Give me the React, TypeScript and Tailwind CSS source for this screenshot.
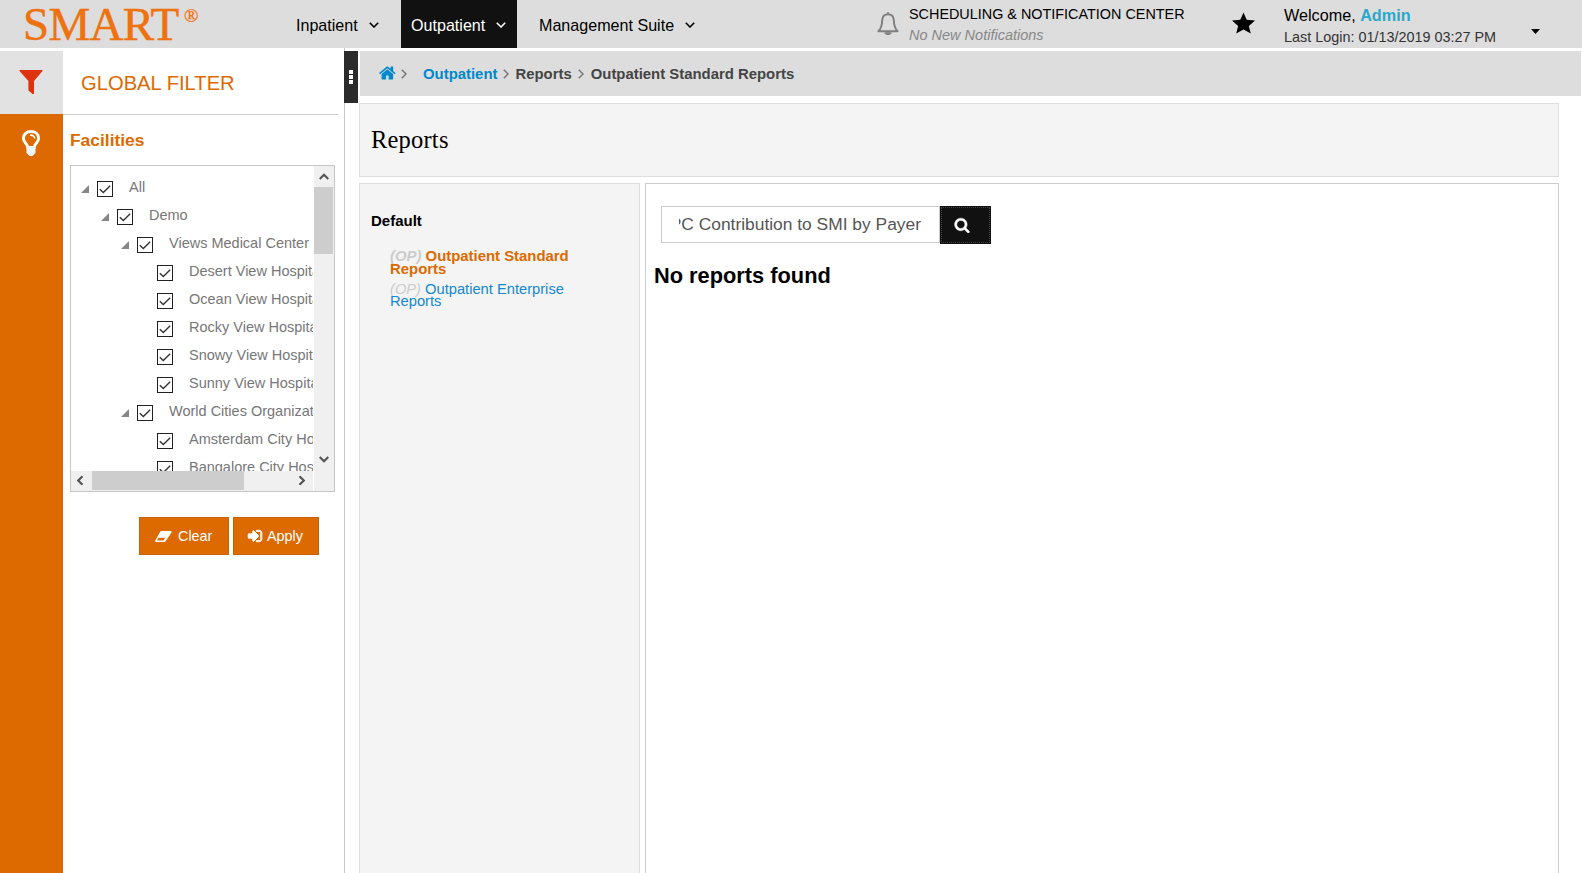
import type { ReactNode } from "react";

const PATHS = {
  home: "M1408 992v480q0 26-19 45t-45 19h-384v-384h-256v384h-384q-26 0-45-19t-19-45v-480q0-1 .5-3t.5-3l575-474 575 474q1 2 1 6zm223-69l-62 74q-8 9-21 11h-3q-13 0-21-7l-692-577-692 577q-12 8-24 7-13-2-21-11l-62-74q-8-10-7-23.5t11-21.5l719-599q32-26 76-26t76 26l244 204v-195q0-14 9-23t23-9h192q14 0 23 9t9 23v408l219 182q10 8 11 21.5t-7 23.5z",
  search:
    "M1216 832q0-185-131.5-316.5t-316.5-131.5-316.5 131.5-131.5 316.5 131.5 316.5 316.5 131.5 316.5-131.5 131.5-316.5zm512 832q0 52-38 90t-90 38q-54 0-90-38l-343-342q-179 124-399 124-143 0-273.5-55.5t-225-150-150-225-55.5-273.5 55.5-273.5 150-225 225-150 273.5-55.5 273.5 55.5 225 150 150 225 55.5 273.5q0 220-124 399l343 343q37 37 37 90z",
  eraser:
    "M6.300 0H15.800Q17 .3 16.500 1.500L10.600 10.200Q10 11 9.200 11H1Q-.2 10.700 .3 9.500L5.200 .7Q5.600 0 6.300 0ZM3.600 6.800L1.900 9.600H8.600L10.300 6.800Z",
  signIn:
    "M1312 896q0 26-19 45l-544 544q-19 19-45 19t-45-19-19-45v-288h-448q-26 0-45-19t-19-45v-384q0-26 19-45t45-19h448v-288q0-26 19-45t45-19 45 19l544 544q19 19 19 45zm352-352v704q0 119-84.5 203.5t-203.5 84.5h-320q-13 0-22.5-9.5t-9.5-22.5q0-4-1-20t-.5-26.5 3-23.5 10-19.5 20.5-6.5h320q66 0 113-47t47-113v-704q0-66-47-113t-113-47h-312l-11.5-1-11.5-3-8-5.5-7-9-2-13.5q0-4-1-20t-.5-26.5 3-23.5 10-19.5 20.5-6.5h320q119 0 203.5 84.5t84.5 203.5z",
};

function Glyph({ d, box = "0 0 1792 1792", className }: { d: string; box?: string; className: string }) {
  return (
    <svg viewBox={box} className={className} fill="currentColor" fillRule="evenodd">
      <path d={d} />
    </svg>
  );
}

function Chevron({ className }: { className: string }) {
  return (
    <svg viewBox="0 0 10 6" className={className} fill="none" stroke="currentColor" strokeWidth="1.6">
      <path d="M0.8 0.8L5 5L9.2 0.8" />
    </svg>
  );
}

function Crumb() {
  return (
    <svg viewBox="0 0 6 10" className="h-[10px] w-[6px] text-[#777]" fill="none" stroke="currentColor" strokeWidth="1.5">
      <path d="M0.8 0.8L5 5L0.8 9.2" />
    </svg>
  );
}

function ScrollArrow({ turn }: { turn: string }) {
  return (
    <svg viewBox="0 0 10 7" className={"h-[7px] w-[10px] " + turn} fill="none" stroke="#555" strokeWidth="2.2">
      <path d="M0.7 6L5 1.7L9.3 6" />
    </svg>
  );
}

function NavItem({ label, className }: { label: string; className: string }) {
  return (
    <a className={"flex h-12 items-center pl-[10px] text-[16.1px] " + className}>
      <span className="pt-px leading-[48px]">{label}</span>
      <Chevron className="ml-[11px] mt-px h-[6px] w-[10px]" />
    </a>
  );
}

function Header() {
  return (
    <header className="flex h-12 shrink-0 items-start bg-[#ddd] whitespace-nowrap text-black">
      <div className="flex h-12 w-[286px] items-start pl-[23px] font-['Liberation_Serif',serif] text-[#ee7210]">
        <span className="w-[161px] text-[47px] leading-[48px] tracking-[-0.7px] [-webkit-text-stroke:0.5px_#ee7210]">SMART</span>
        <span className="mt-[4px] text-[19px] leading-[24px] [-webkit-text-stroke:0.3px_#ee7210]">®</span>
      </div>
      <nav className="flex w-[591px]">
        <NavItem label="Inpatient" className="w-[115px]" />
        <NavItem label="Outpatient" className="w-[116px] bg-[#111] text-white" />
        <NavItem label="Management Suite" className="ml-[12px]" />
      </nav>
      <svg viewBox="0 0 22 24" className="mt-[12px] h-[24px] w-[22px] text-[#808080]">
        <path
          d="M11 2.2C7.4 2.2 5.4 4.8 5.2 8.2C5 13.5 4.3 16.5 1.4 19.2H20.6C17.7 16.5 17 13.5 16.8 8.2C16.6 4.8 14.6 2.2 11 2.2Z"
          fill="none"
          stroke="currentColor"
          strokeWidth="2"
          strokeLinejoin="round"
        />
        <path d="M10 0.3h2v2h-2zM7.2 20.2h7.6c-.3 1.8-1.8 2.9-3.8 2.9s-3.5-1.1-3.8-2.9z" fill="currentColor" />
      </svg>
      <div className="ml-[10px] w-[323px]">
        <div className="mt-[4px] text-[14.4px] leading-[20px]">SCHEDULING &amp; NOTIFICATION CENTER</div>
        <div className="mt-px text-[14.5px] leading-[20px] text-[#888] italic">No New Notifications</div>
      </div>
      <svg viewBox="0 0 24 22" className="mt-[12px] h-[22px] w-[23px]" fill="#000">
        <path d="M12 0L15.3 7.6L24 8.4L17.6 14L19.6 22L12 17.8L4.4 22L6.4 14L0 8.4L8.7 7.6Z" />
      </svg>
      <div className="ml-[29px] w-[247px]">
        <div className="mt-[5px] text-[16.2px] leading-[20px]">
          Welcome, <b className="text-[#29a8cd]">Admin</b>
        </div>
        <div className="mt-[2px] text-[14.4px] leading-[20px] text-[#333]">Last Login: 01/13/2019 03:27 PM</div>
      </div>
      <svg viewBox="0 0 9 5" className="mt-[29px] h-[5px] w-[9px]">
        <path d="M0 0H9L4.5 5Z" />
      </svg>
    </header>
  );
}

const FACILITIES = [
  { name: "All", depth: 0, open: true },
  { name: "Demo", depth: 1, open: true },
  { name: "Views Medical Center", depth: 2, open: true },
  { name: "Desert View Hospital", depth: 3, open: false },
  { name: "Ocean View Hospital", depth: 3, open: false },
  { name: "Rocky View Hospital", depth: 3, open: false },
  { name: "Snowy View Hospital", depth: 3, open: false },
  { name: "Sunny View Hospital", depth: 3, open: false },
  { name: "World Cities Organization", depth: 2, open: true },
  { name: "Amsterdam City Hospital", depth: 3, open: false },
  { name: "Bangalore City Hospital", depth: 3, open: false },
];

const INDENT = ["pl-[10px]", "pl-[30px]", "pl-[50px]", "pl-[70px]"];

function Tree() {
  return (
    <div className="ml-[7px] grid h-[327px] w-[265px] grid-cols-[243px_20px] grid-rows-[305px_20px] border border-[#c6c6c6]">
      <div className="overflow-hidden pt-[8px] pr-px">
        <div className="h-[297px] w-[242px] overflow-hidden">
          {FACILITIES.map((f) => (
            <div key={f.name} className={"flex h-[28px] items-start whitespace-nowrap " + INDENT[f.depth]}>
              <svg viewBox="0 0 8 8" className="mt-[11px] h-[8px] w-[8px] shrink-0">
                {f.open && <path d="M8 0V8H0Z" fill="#868686" />}
              </svg>
              <svg viewBox="0 0 16 16" className="mt-[7px] ml-[8px] h-[16px] w-[16px] shrink-0" fill="none">
                <rect x="0.5" y="0.5" width="15" height="15" fill="#fff" stroke="#222" />
                <path d="M2.8 8.2L6.3 11.6L13.2 4.7" stroke="#333" strokeWidth="1.4" />
              </svg>
              <span className="mt-[3px] ml-[16px] text-[14.5px] leading-[20px] text-[#777]">{f.name}</span>
            </div>
          ))}
        </div>
      </div>
      <div className="row-span-2 flex flex-col items-center bg-[#f0f0f0]">
        <div className="flex h-[21px] items-center pr-px">
          <ScrollArrow turn="" />
        </div>
        <div className="mr-px h-[67px] w-[19px] bg-[#cdcdcd]" />
        <div className="mt-[195px] flex h-[24px] items-start pt-[7px] pr-px">
          <ScrollArrow turn="rotate-180" />
        </div>
      </div>
      <div className="mr-px flex items-center bg-[#f0f0f0]">
        <div className="flex w-[21px] justify-center pr-[3px] pb-px">
          <ScrollArrow turn="-rotate-90" />
        </div>
        <div className="mb-px h-[19px] w-[152px] bg-[#cdcdcd]" />
        <div className="ml-[47px] flex w-[21px] justify-center pb-px">
          <ScrollArrow turn="rotate-90" />
        </div>
      </div>
    </div>
  );
}

function Action({ label, icon, className }: { label: string; icon: ReactNode; className: string }) {
  return (
    <button className={"flex h-[38px] items-center border border-[#c86100] bg-[#dc6a00] text-[14.4px] text-white " + className}>
      {icon}
      <span className="pt-px">{label}</span>
    </button>
  );
}

function Sidebar() {
  return (
    <aside className="flex w-[344px] shrink-0">
      <div className="flex w-[63px] shrink-0 flex-col bg-[#dc6a00] pt-[3px] shadow-[inset_0_3px_0_#fff]">
        <div className="flex h-[63px] justify-center bg-[#e2e2e2] pt-[19px] pr-px">
          <svg viewBox="0 0 24 24" className="h-[24px] w-[24px]" fill="#dd3311">
            <path d="M0.8 0H23.2Q24 0.2 23.5 1L15 11V24H13.6L9.4 20.4V11L0.5 1Q0 0.2 0.8 0Z" />
          </svg>
        </div>
        <svg viewBox="0 0 20 26" className="mt-[16px] ml-[21px] h-[26px] w-[20px]">
          <path
            d="M6.8 17.5C6.4 13.5 2.4 12.5 2.4 8.2C2.4 4.2 5.7 1.5 10 1.5S17.600 4.200 17.600 8.200C17.600 12.500 13.600 13.500 13.200 17.500Z"
            fill="none"
            stroke="#fff"
            strokeWidth="2.9"
          />
          <path d="M5.500 17h9v5.400c0 .8-.5 1.200-1.200 1.300C12.800 25.300 11.700 26 10 26s-2.800-.7-3.300-2.300c-.7-.1-1.200-.5-1.200-1.300z" fill="#eef5ff" />
          <path d="M9 5.200C11.500 4.800 13.500 6.200 13.800 8.500" fill="none" stroke="#fff" strokeWidth="1.600" />
        </svg>
      </div>
      <div className="w-[281px]">
        <div className="mt-[3px] flex h-[64px] w-[275px] items-center border-b border-[#ccc] pt-[2px] pl-[18px] text-[20.2px] text-[#dc6a00]">
          GLOBAL FILTER
        </div>
        <h4 className="mt-[13px] mb-[13px] pl-[7px] text-[17.4px] leading-[24px] font-bold text-[#dc6a00]">Facilities</h4>
        <Tree />
        <div className="mt-[25px] ml-[76px] flex gap-[4px]">
          <Action
            label="Clear"
            className="w-[90px] gap-[6px] pl-[15px]"
            icon={<Glyph d={PATHS.eraser} box="0 0 17 11" className="h-[11px] w-[17px]" />}
          />
          <Action
            label="Apply"
            className="w-[86px] gap-[4px] pl-[13px]"
            icon={<Glyph d={PATHS.signIn} className="h-[16px] w-[16px] stroke-white [stroke-width:90]" />}
          />
        </div>
      </div>
    </aside>
  );
}

function Handle() {
  return (
    <div className="w-[15px] shrink-0 border-l border-[#c8c8c8]">
      <div className="mt-[3px] -ml-px flex h-[52px] w-[14px] flex-col items-center justify-center gap-[1px] bg-[#2b2b2b]">
        <span className="h-[4px] w-[4px] bg-white" />
        <span className="h-[4px] w-[4px] bg-white" />
        <span className="h-[4px] w-[4px] bg-white" />
      </div>
    </div>
  );
}

function Breadcrumbs() {
  return (
    <div className="mt-[3px] ml-px flex h-[45px] w-[1221px] items-center bg-[#ddd] pt-px text-[14.9px] font-bold whitespace-nowrap text-[#444]">
      <Glyph d={PATHS.home} className="-mt-[3px] ml-[19px] h-[18px] w-[18px] text-[#0088cc]" />
      <span className="ml-[4px] flex w-[22px]">
        <Crumb />
      </span>
      <a className="text-[#0088cc]">Outpatient</a>
      <span className="flex w-[18px] justify-center pr-px">
        <Crumb />
      </span>
      <span>Reports</span>
      <span className="flex w-[19px] justify-center pr-px">
        <Crumb />
      </span>
      <span>Outpatient Standard Reports</span>
    </div>
  );
}

function ReportList() {
  return (
    <section className="w-[281px] border border-b-0 border-[#ddd] bg-[#f4f4f4] pl-[11px]">
      <h5 className="mt-[27px] text-[15px] leading-[20px] font-bold text-black">Default</h5>
      <ul className="ml-[19px] w-[200px]">
        <li className="mt-[19px] text-[14.9px] leading-[13px] font-bold text-[#dc6a00]">
          <i className="text-[#ccc]">(OP)</i> Outpatient Standard Reports
        </li>
        <li className="mt-[7px] text-[14.7px] leading-[12px] text-[#1289cf]">
          <i className="text-[#ccc]">(OP)</i> Outpatient Enterprise Reports
        </li>
      </ul>
    </section>
  );
}

function Results() {
  return (
    <section className="ml-[5px] w-[914px] border border-b-0 border-[#ccc] bg-white">
      <div className="mt-[22px] ml-[15px] flex items-start">
        <div className="h-[37px] w-[279px] border border-[#ccc] pr-[18px] pl-[17px]">
          <div className="flex h-[35px] items-center justify-end overflow-hidden text-[17.4px] whitespace-nowrap text-[#555]">
            <span>PC Contribution to SMI by Payer</span>
          </div>
        </div>
        <button className="flex h-[38px] w-[51px] bg-[#111] p-px">
          <span className="flex h-full w-full items-center border border-dotted border-[#444] pl-[12px]">
            <Glyph d={PATHS.search} className="h-[16px] w-[16px] stroke-white text-white [stroke-width:50]" />
          </span>
        </button>
      </div>
      <h3 className="mt-[17px] ml-[8px] text-[21.8px] leading-[30px] font-bold text-black">No reports found</h3>
    </section>
  );
}

export default function App() {
  return (
    <div className="flex h-[873px] w-[1582px] flex-col overflow-hidden bg-white font-['Liberation_Sans',Arial,sans-serif]">
      <Header />
      <div className="flex min-h-0 flex-1">
        <Sidebar />
        <Handle />
        <main className="flex min-w-0 flex-1 flex-col">
          <Breadcrumbs />
          <div className="mt-[7px] flex h-[74px] w-[1200px] shrink-0 items-center border border-[#ddd] bg-[#f4f4f4] pl-[11px] font-['Liberation_Serif',serif] text-[24.5px] tracking-[0.2px] text-black">
            Reports
          </div>
          <div className="mt-[6px] flex min-h-0 flex-1">
            <ReportList />
            <Results />
          </div>
        </main>
      </div>
    </div>
  );
}
